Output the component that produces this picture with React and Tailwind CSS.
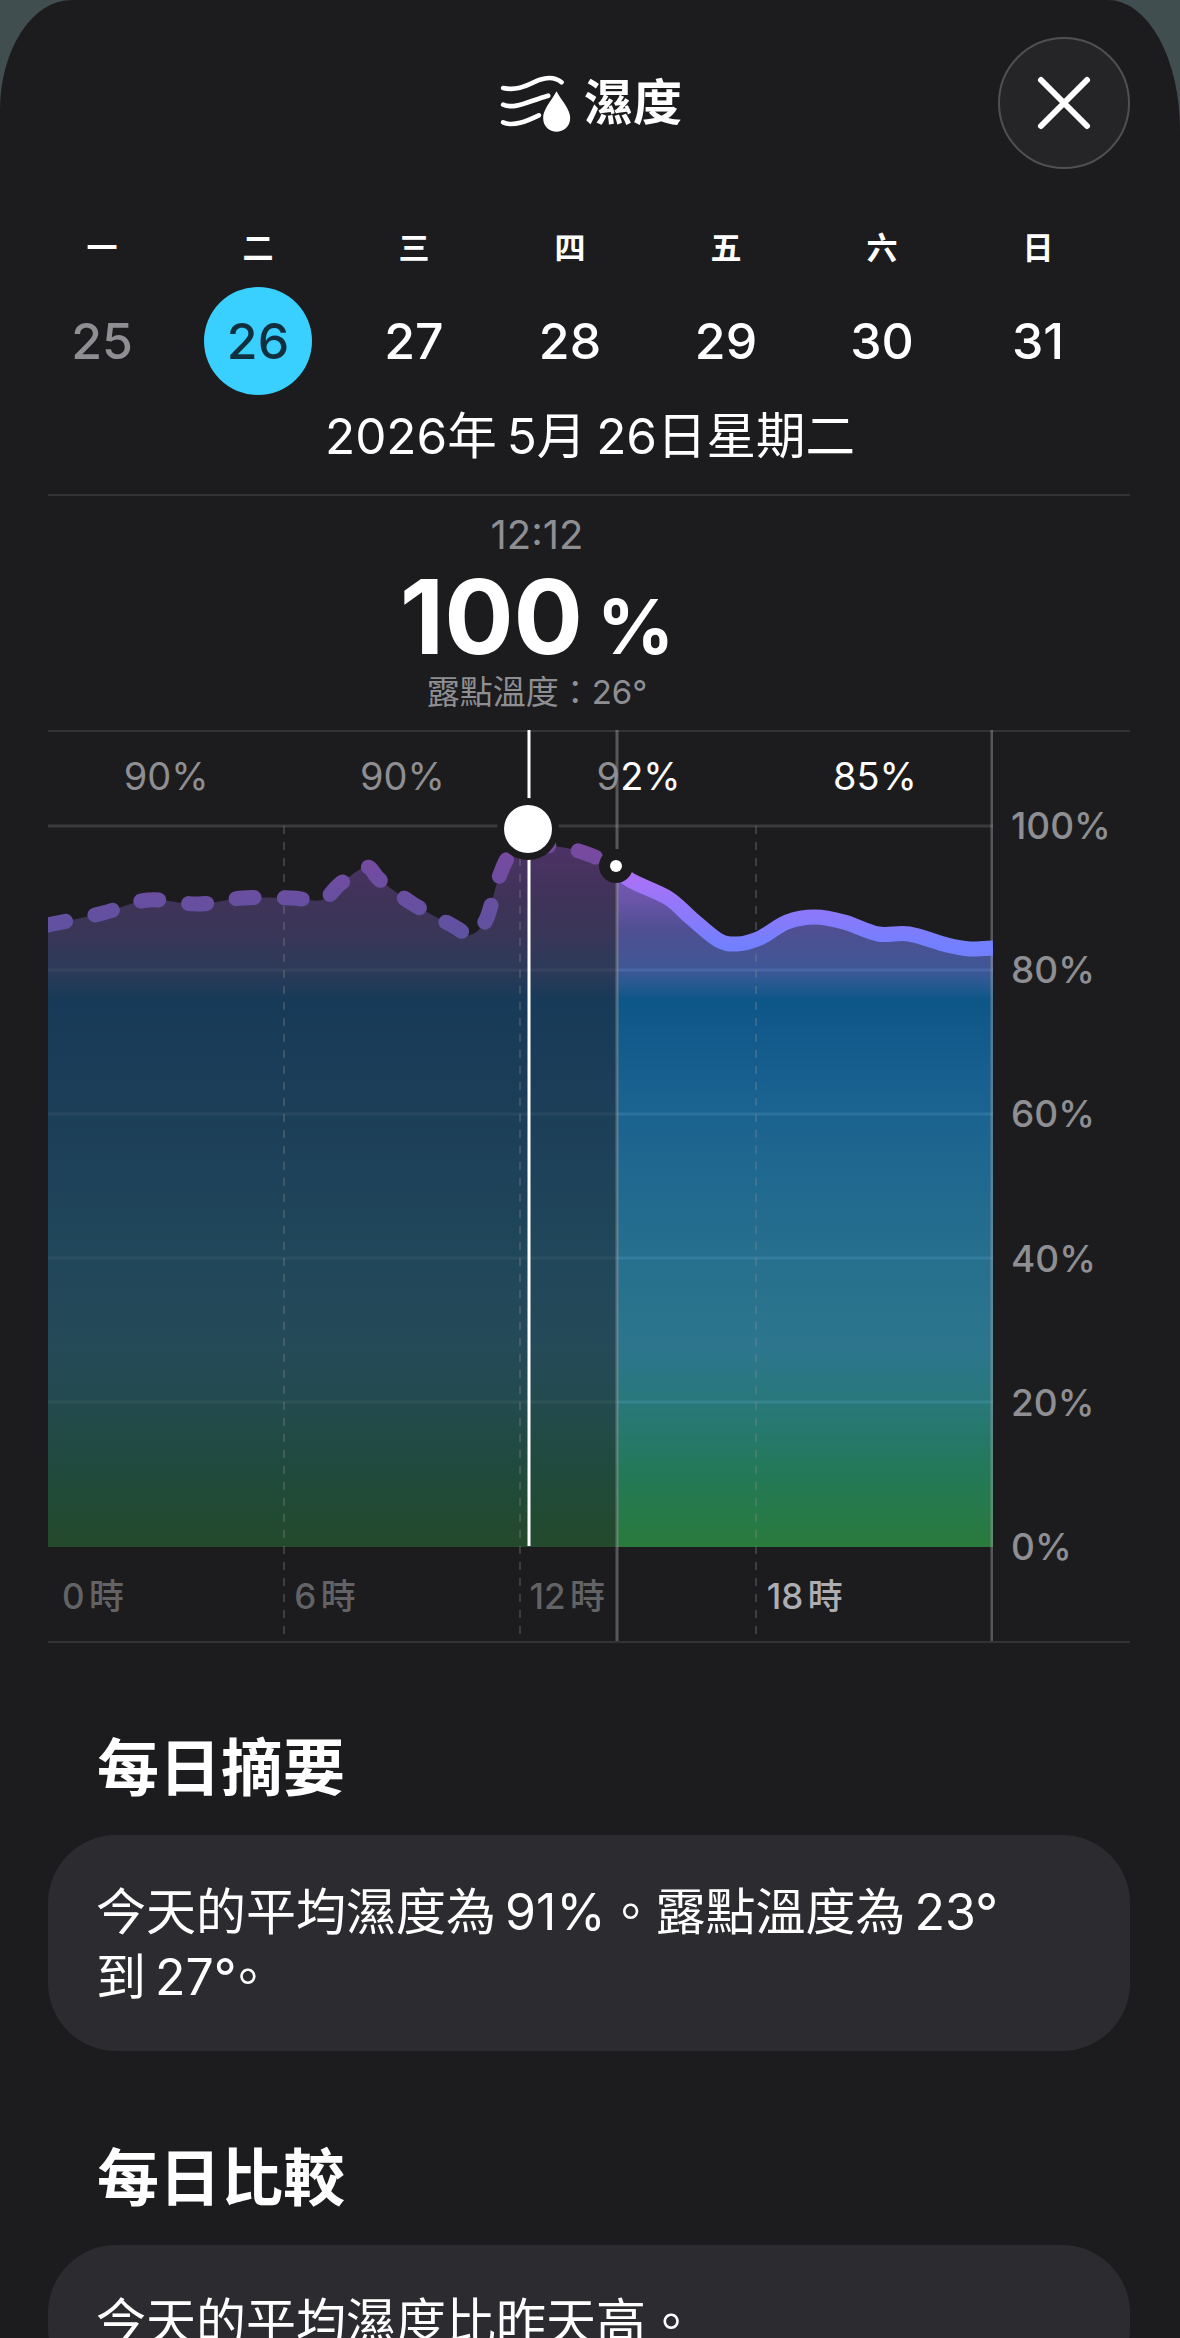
import React from "react";

const days = [
  { label: "一", num: 25, past: true },
  { label: "二", num: 26, active: true },
  { label: "三", num: 27 },
  { label: "四", num: 28 },
  { label: "五", num: 29 },
  { label: "六", num: 30 },
  { label: "日", num: 31 },
];

const pastPoints = [
  [48, 925], [103, 913], [148, 900], [198, 904], [243, 898], [291, 898], [322, 900], [340, 884],
  [366, 867], [380, 880], [413, 904], [455, 927], [470, 935], [486, 920], [498, 880], [510, 855],
  [530, 845], [575, 850], [616, 866],
];

const futurePoints = [
  [616, 866], [630, 880], [668, 898], [691, 918], [718, 940], [737, 944], [760, 938], [787, 922],
  [815, 917], [844, 922], [878, 934], [909, 934], [947, 945], [970, 949], [993, 948],
];

// catmull-rom through the sampled points
const smooth = (pts) => {
  let d = `M${pts[0][0]} ${pts[0][1]}`;
  for (let i = 0; i < pts.length - 1; i++) {
    const p0 = pts[i - 1] || pts[i];
    const p1 = pts[i];
    const p2 = pts[i + 1];
    const p3 = pts[i + 2] || p2;
    const c1x = p1[0] + (p2[0] - p0[0]) / 6;
    const c1y = p1[1] + (p2[1] - p0[1]) / 6;
    const c2x = p2[0] - (p3[0] - p1[0]) / 6;
    const c2y = p2[1] - (p3[1] - p1[1]) / 6;
    d += ` C${c1x} ${c1y} ${c2x} ${c2y} ${p2[0]} ${p2[1]}`;
  }
  return d;
};

const pastLine = smooth(pastPoints);
const futureLine = smooth(futurePoints);
const wholeLine = smooth([...pastPoints.slice(0, -1), ...futurePoints]);
const area = `${wholeLine} L993 1547 L48 1547 Z`;

const HumidityIcon = () => (
  <svg width="77" height="60" viewBox="140 60 230 180" fill="none">
    <g stroke="white" strokeWidth="14" strokeLinecap="round">
      <path d="M155 105 C200 115 230 95 265 80 C290 72 315 75 330 88" />
      <path d="M155 155 C190 170 230 145 290 128" />
      <path d="M155 208 C185 222 225 205 262 187" />
    </g>
    <path
      d="M315 115 C295 150 275 170 275 195 C275 222 295 236 315 236 C335 236 356 222 356 195 C356 170 335 150 315 115 Z"
      fill="white"
    />
  </svg>
);

const ChartDrawing = () => (
  <svg className="absolute -top-0.5 left-0" width="945" height="911" viewBox="48 730 945 911" fill="none">
    <defs>
      <linearGradient id="past" gradientUnits="userSpaceOnUse" x1="0" y1="845" x2="0" y2="1547">
        <stop offset="0" stopColor="#4d3266" />
        <stop offset="0.078" stopColor="#3f3358" />
        <stop offset="0.121" stopColor="#3a3658" />
        <stop offset="0.178" stopColor="#2c3a58" />
        <stop offset="0.221" stopColor="#173a58" />
        <stop offset="0.363" stopColor="#1c3e58" />
        <stop offset="0.585" stopColor="#20475a" />
        <stop offset="0.719" stopColor="#254a58" />
        <stop offset="0.79" stopColor="#234a4f" />
        <stop offset="0.894" stopColor="#204a3c" />
        <stop offset="1" stopColor="#234a2c" />
      </linearGradient>
      <linearGradient id="future" gradientUnits="userSpaceOnUse" x1="0" y1="845" x2="0" y2="1547">
        <stop offset="0" stopColor="#8060c8" />
        <stop offset="0.078" stopColor="#6a55a8" />
        <stop offset="0.121" stopColor="#4f4f92" />
        <stop offset="0.178" stopColor="#3f5796" />
        <stop offset="0.2" stopColor="#255a90" />
        <stop offset="0.221" stopColor="#0d5688" />
        <stop offset="0.363" stopColor="#1a6290" />
        <stop offset="0.585" stopColor="#266f8e" />
        <stop offset="0.719" stopColor="#2c768d" />
        <stop offset="0.79" stopColor="#28787c" />
        <stop offset="0.894" stopColor="#237958" />
        <stop offset="1" stopColor="#2a7a3c" />
      </linearGradient>
      <linearGradient id="lineFuture" gradientUnits="userSpaceOnUse" x1="0" y1="870" x2="0" y2="945">
        <stop offset="0" stopColor="#b06ff5" />
        <stop offset="1" stopColor="#7280ff" />
      </linearGradient>
      <linearGradient id="linePast" gradientUnits="userSpaceOnUse" x1="0" y1="850" x2="0" y2="935">
        <stop offset="0" stopColor="#774aa0" />
        <stop offset="1" stopColor="#5e52a0" />
      </linearGradient>
      <clipPath id="clipPast"><rect x="48" y="730" width="569" height="911" /></clipPath>
      <clipPath id="clipFuture"><rect x="617" y="730" width="376" height="911" /></clipPath>
    </defs>

    <line x1="48" x2="993" y1="826" y2="826" stroke="#3a3a3c" strokeWidth="3" />
    <path d={area} fill="url(#past)" clipPath="url(#clipPast)" />
    <path d={area} fill="url(#future)" clipPath="url(#clipFuture)" />

    {[970, 1114, 1258, 1402].map((y) => (
      <g key={y}>
        <line x1="48" x2="617" y1={y} y2={y} stroke="white" strokeOpacity="0.05" strokeWidth="3" />
        <line x1="617" x2="993" y1={y} y2={y} stroke="#8fd0ff" strokeOpacity="0.14" strokeWidth="3" />
      </g>
    ))}
    {[284, 520, 756].map((x) => (
      <line key={x} x1={x} x2={x} y1="826" y2="1640" stroke="#8e8e93" strokeOpacity="0.3" strokeWidth="2" strokeDasharray="8 8" />
    ))}
    <line x1="617" x2="617" y1="730" y2="1641" stroke="#a0a0a5" strokeOpacity="0.45" strokeWidth="3" />
    <line x1="992" x2="992" y1="730" y2="1641" stroke="#a0a0a5" strokeOpacity="0.45" strokeWidth="3" />

    <path d={futureLine} stroke="url(#lineFuture)" strokeWidth="15" strokeLinejoin="round" clipPath="url(#clipFuture)" />
    <path d={pastLine} stroke="url(#linePast)" strokeWidth="15" strokeLinecap="round" strokeDasharray="18 30" clipPath="url(#clipPast)" />

    <line x1="529" x2="529" y1="730" y2="1546" stroke="white" strokeWidth="3" />
    <circle cx="528" cy="829" r="31" fill="#1c1c1e" />
    <circle cx="528" cy="829" r="24" fill="white" />
    <circle cx="616" cy="866" r="17" fill="#1c1c1e" />
    <circle cx="616" cy="866" r="6" fill="white" />
  </svg>
);

const Card = ({ children }) => (
  <div className="mr-[50px] ml-12 rounded-[68px] bg-[#2c2c30] px-12 pt-[45px] pb-[41px] text-[50px] leading-[65px] [word-spacing:-5px] text-white">
    {children}
  </div>
);

const Heading = ({ children }) => (
  <h2 className="ml-[97px] text-[62px] leading-[74px] font-semibold text-white">{children}</h2>
);

export default function App() {
  return (
    <div className="h-[2338px] w-[1180px] overflow-hidden bg-[#414e50] font-['Inter','Noto_Sans_CJK_TC',sans-serif]">
      <div className="h-full rounded-tl-[72px_110px] rounded-tr-[72px_130px] bg-[#1c1c1e] pt-[37px]">
        {/* Header */}
        <div className="grid grid-cols-[1fr_auto_1fr] items-center">
          <div />
          <div className="flex items-center gap-[9px]">
            <HumidityIcon />
            <span className="text-[49px] leading-[60px] font-bold text-white">濕度</span>
          </div>
          <button className="mr-[50px] flex h-[132px] w-[132px] items-center justify-center justify-self-end rounded-full border-2 border-[#505052] bg-[#252527]">
            <svg width="56" height="56" viewBox="0 0 56 56" fill="none" stroke="white" strokeWidth="6" strokeLinecap="round">
              <path d="M5 5 L51 51 M51 5 L5 51" />
            </svg>
          </button>
        </div>

        {/* Week strip */}
        <div className="mt-[59px] ml-6 grid w-[1092px] grid-cols-7 text-center text-[31px] leading-10 font-semibold text-white">
          {days.map((d) => (
            <div key={d.label}>{d.label}</div>
          ))}
        </div>
        <div className="mt-[19px] ml-6 grid w-[1092px] grid-cols-7 text-[50px] font-medium">
          {days.map((d) => (
            <div key={d.num} className="flex justify-center">
              <div
                className={
                  d.active
                    ? "flex h-[108px] w-[108px] items-center justify-center rounded-full bg-[#39d0ff] text-[#10303f]"
                    : d.past
                      ? "flex h-[108px] w-[108px] items-center justify-center text-[#8e8e93]"
                      : "flex h-[108px] w-[108px] items-center justify-center text-white"
                }
              >
                {d.num}
              </div>
            </div>
          ))}
        </div>
        <div className="mt-[11px] text-center text-[49.5px] leading-[60px] [word-spacing:-4px] text-white">2026年 5月 26日星期二</div>
        <div className="mt-[28px] mr-[50px] ml-12 h-0.5 bg-[#333335]" />

        {/* Reading */}
        <div className="flex w-[1074px] flex-col items-center">
          <div className="mt-[17px] text-[40px] leading-[44px] text-[#8e8e93]">12:12</div>
          <div className="mt-5 flex items-baseline gap-[14px] leading-[80px] font-bold text-white">
            <span className="text-[103px]">100</span>
            <span className="text-[76px]">%</span>
          </div>
          <div className="mt-1.5 text-[33px] leading-10 text-[#8e8e93]">露點溫度：26°</div>
        </div>

        {/* Chart */}
        <div className="mt-[18px] mr-[50px] ml-12 flex h-[913px] border-y-2 border-[#333335]">
          <div className="relative w-[945px]">
            <ChartDrawing />
            <div className="relative grid h-[88px] grid-cols-4 items-center text-center text-[38px] text-[#8e8e93]">
              <div>90%</div>
              <div>90%</div>
              <div>
                9<span className="text-white">2%</span>
              </div>
              <div className="text-white">85%</div>
            </div>
            <div className="relative mt-[729px] grid h-[94px] grid-cols-4 items-center text-[35px] font-medium [word-spacing:-5px]">
              <div className="pl-[14px] text-[#636366]">0 時</div>
              <div className="pl-[10px] text-[#636366]">6 時</div>
              <div className="pl-[9px] text-[#636366]">12 時</div>
              <div className="pl-[10px] text-[#aeaeb2]">18 時</div>
            </div>
          </div>
          <div className="flex h-[837px] flex-1 flex-col justify-between pt-[72px] pl-[18px] text-[37px] leading-11 font-medium text-[#8e8e93]">
            <div>100%</div>
            <div>80%</div>
            <div>60%</div>
            <div>40%</div>
            <div>20%</div>
            <div>0%</div>
          </div>
        </div>

        {/* Summaries */}
        <div className="mt-[89px]">
          <Heading>每日摘要</Heading>
        </div>
        <div className="mt-[29px]">
          <Card>
            今天的平均濕度為 91%。露點溫度為 23°
            <br />
            到 27<span className="tracking-[-14px]">°</span>。
          </Card>
        </div>
        <div className="mt-[91px]">
          <Heading>每日比較</Heading>
        </div>
        <div className="mt-[29px]">
          <Card>今天的平均濕度比昨天高。</Card>
        </div>
      </div>
    </div>
  );
}
